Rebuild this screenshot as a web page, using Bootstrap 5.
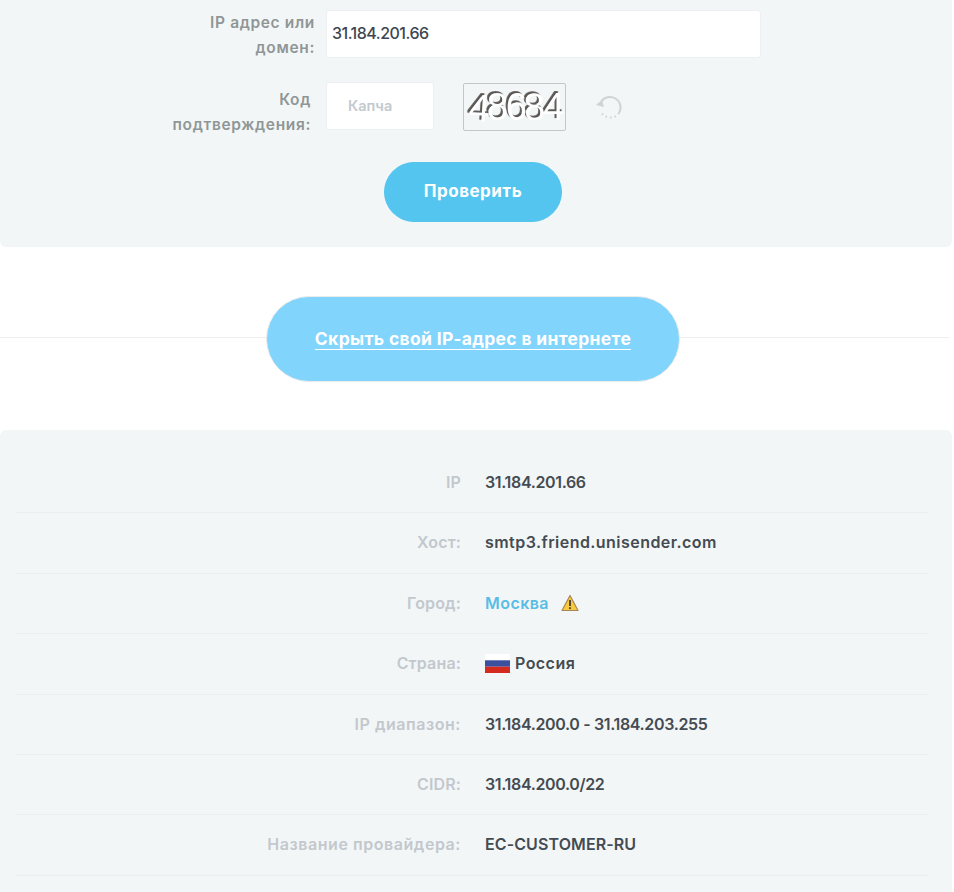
<!DOCTYPE html>
<html lang="ru">
<head>
<meta charset="utf-8">
<title>IP</title>
<link href="https://cdn.jsdelivr.net/npm/bootstrap@5.3.0/dist/css/bootstrap.min.css" rel="stylesheet">
<style>
html,body{height:892px;overflow:hidden;background:#fff}
body{font-family:Inter,"Liberation Sans",sans-serif;font-weight:600;font-size:16px}
.shell{width:952px}
.panel-top{background:#f3f6f7;height:247px;padding-top:10px;border-radius:0 0 6px 6px}
.panel-bottom{background:#f3f6f7;height:462px;padding:23px 23px 0 16px;border-radius:6px 6px 0 0}
.form-line{display:flex;gap:11px}
.form-line + .form-line{margin-top:22px}
.form-lab{width:315px;text-align:right;color:#8f9696;line-height:25px;font-size:15.5px;letter-spacing:.65px}
.form-lab.alt{width:311px;margin-right:4px;padding-top:5px}
.ip-field{width:435px;height:48px;border:1px solid #edf0f1;border-radius:3px;padding:0 5px 2px;font-size:16px;font-weight:500;color:#3d4650;font-family:Inter,sans-serif;background:#fff;outline:0;letter-spacing:-.5px}
.cap-field{width:108px;height:48px;border:1px solid #edf0f1;border-radius:3px;padding:0 0 2px 21px;font-size:14.5px;font-weight:600;background:#fff;outline:0;margin-right:18px;font-family:Inter,sans-serif}
.cap-field::placeholder{color:#c3c9ce;opacity:1}
.cap-img{display:block;width:103px;height:48px;margin-top:1px;border:1px solid #c3c7ca;border-radius:2px}
.cap-txt{font:400 40px "Liberation Sans",sans-serif;letter-spacing:-2.6px;fill:#fff;filter:drop-shadow(-2px -2px 0 #5a5654)}
.refresh{display:block;margin:12px 0 0 18px}
.go-btn{display:block;width:178px;height:60px;margin:25px auto 0;position:relative;left:-3px;border-radius:30px;background:#54c5ee;border:1px solid #54c5ee;color:#fff;font-weight:700;font-size:17px;padding:0;letter-spacing:.5px}
.band{height:183px;display:flex;align-items:center;justify-content:center;position:relative;left:-3px;background:linear-gradient(#efefef,#efefef) 0 90px/954px 1px no-repeat}
.hide-btn{display:flex;width:414px;height:86px;border-radius:43px;background:#81d4fc;border:1px solid #ececec;align-items:center;justify-content:center;color:#fff;font-size:17.5px;font-weight:700;text-decoration:none;padding-top:1px}
.hide-btn span{border-bottom:1px solid #fff;line-height:20px;letter-spacing:.32px}
.info-row{display:flex;gap:24px;height:60.4px;padding-top:16px;border-bottom:1px solid #ebeeef;line-height:26px;font-size:16px}
.info-key{width:445px;text-align:right;color:#c2c8cd;letter-spacing:.15px}
.info-key.wide{letter-spacing:.55px}
.info-val{color:#444b52;letter-spacing:.45px;display:flex;align-items:center;height:26px}
.info-val.num{letter-spacing:-.35px}
.info-val.plain{letter-spacing:.1px}
.city{color:#59bde6;text-decoration:none;margin-right:12px}
.flag{margin-right:5px}
</style>
</head>
<body>
<div class="shell">
  <div class="panel-top">
    <div class="form-line">
      <label class="form-lab" for="ip">IP адрес или<br>домен:</label>
      <input id="ip" class="ip-field" type="text" value="31.184.201.66">
    </div>
    <div class="form-line">
      <label class="form-lab alt" for="cap">Код<br>подтверждения:</label>
      <input id="cap" class="cap-field" type="text" placeholder="Капча">
      <svg class="cap-img" viewBox="0 0 103 48" xmlns="http://www.w3.org/2000/svg">
        <rect width="103" height="48" fill="#f3f6f7"/>
        <text class="cap-txt" x="3" y="38" rotate="4 0 0 -3 0">48684</text>
      </svg>
      <svg class="refresh" width="28" height="26" viewBox="0 0 28 26" xmlns="http://www.w3.org/2000/svg">
        <path d="M6 8A10.500 10.500 0 1 1 24 19" fill="none" stroke="#cfd3d6" stroke-width="2"/>
        <path d="M24 19A10.500 10.500 0 0 1 6 18" fill="none" stroke="#cfd3d6" stroke-width="2" stroke-dasharray="1.500 3"/>
        <path d="M1 11l6-5 2 7z" fill="#cfd3d6"/>
      </svg>
    </div>
    <button class="go-btn" type="button">Проверить</button>
  </div>
  <div class="band"><a class="hide-btn" href="#"><span>Скрыть свой IP-адрес в интернете</span></a></div>
  <div class="panel-bottom">
    <div class="info-row"><div class="info-key">IP</div><div class="info-val num">31.184.201.66</div></div>
    <div class="info-row"><div class="info-key">Хост:</div><div class="info-val">smtp3.friend.unisender.com</div></div>
    <div class="info-row"><div class="info-key">Город:</div><div class="info-val"><a class="city" href="#">Москва</a>
      <svg width="18" height="18" viewBox="0 0 18 18" xmlns="http://www.w3.org/2000/svg"><path d="M9 1.500L17 16.500H1z" fill="#f7cb3c" stroke="#a9855a" stroke-width="1.200" stroke-linejoin="round"/><path d="M9 6v6" stroke="#5b4a32" stroke-width="2"/><circle cx="9" cy="14.200" r="1.100" fill="#5b4a32"/></svg></div></div>
    <div class="info-row"><div class="info-key">Страна:</div><div class="info-val">
      <svg class="flag" width="25" height="19" viewBox="0 0 25 19" xmlns="http://www.w3.org/2000/svg"><rect width="25" height="6.300" fill="#fff"/><rect y="6.300" width="25" height="6.400" fill="#3b4f9f"/><rect y="12.700" width="25" height="6.300" fill="#d52b1e"/></svg>Россия</div></div>
    <div class="info-row"><div class="info-key wide">IP диапазон:</div><div class="info-val num">31.184.200.0 - 31.184.203.255</div></div>
    <div class="info-row"><div class="info-key">CIDR:</div><div class="info-val num">31.184.200.0/22</div></div>
    <div class="info-row"><div class="info-key wide">Название провайдера:</div><div class="info-val plain">EC-CUSTOMER-RU</div></div>
  </div>
</div>
</body>
</html>
